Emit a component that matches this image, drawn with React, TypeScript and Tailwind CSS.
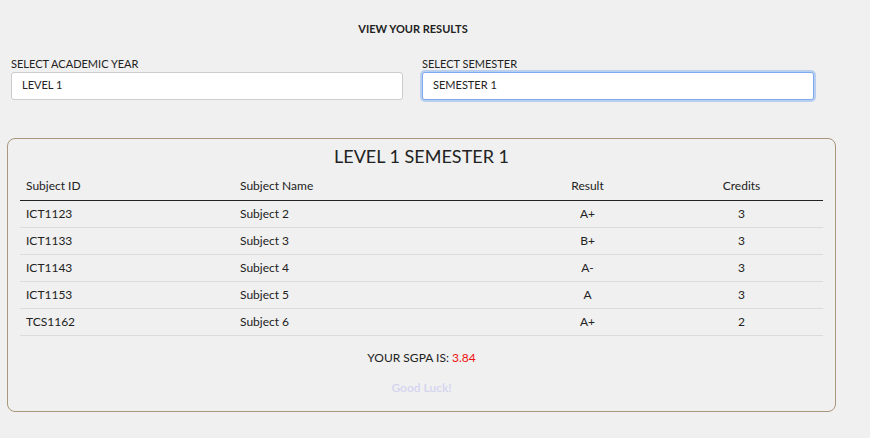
import React from 'react';

const rows = [
  { id: 'ICT1123', name: 'Subject 2', result: 'A+', credits: 3 },
  { id: 'ICT1133', name: 'Subject 3', result: 'B+', credits: 3 },
  { id: 'ICT1143', name: 'Subject 4', result: 'A-', credits: 3 },
  { id: 'ICT1153', name: 'Subject 5', result: 'A', credits: 3 },
  { id: 'TCS1162', name: 'Subject 6', result: 'A+', credits: 2 },
];

export default function App() {
  return (
    <div className="min-h-[438px] w-[870px] bg-[#f0f0f0] text-[#222] font-['Lato','Open_Sans',sans-serif]">
      <div className="w-[826px] pt-[21px] text-center text-[11px] font-bold text-[#222]">VIEW YOUR RESULTS</div>

      <div className="mt-[19px] flex gap-[19px] px-[11px]">
        <div className="w-[392px]">
          <label className="block text-[11px] leading-[14px] text-[#222]">SELECT ACADEMIC YEAR</label>
          <div className="mt-[1px] flex h-[28px] items-center rounded-[3px] border border-[#ccc] bg-white px-[10px] text-[11px]">
            LEVEL 1
          </div>
        </div>
        <div className="w-[392px]">
          <label className="block text-[11px] leading-[14px] text-[#222]">SELECT SEMESTER</label>
          <div className="mt-[1px] flex h-[28px] items-center rounded-[3px] border border-[#80a8f0] bg-white px-[10px] text-[11px] shadow-[0_0_0_2px_rgba(140,180,240,0.55)]">
            SEMESTER 1
          </div>
        </div>
      </div>

      <div className="mx-[7px] mt-[38px] w-[829px] rounded-[8px] border border-[#a8977a] px-[12px] pb-[14px] pt-[5px]">
        <h2 className="text-center text-[18px] leading-[24px] text-[#222]">LEVEL 1 SEMESTER 1</h2>
        <table className="mt-[6px] w-full table-fixed text-[12px]">
          <thead>
            <tr className="border-b border-[#222]">
              <th className="w-[214px] px-[6px] pb-[5px] pt-[3px] text-left font-normal">Subject ID</th>
              <th className="w-[281px] px-[6px] pb-[5px] pt-[3px] text-left font-normal">Subject Name</th>
              <th className="w-[145px] px-[6px] pb-[5px] pt-[3px] text-center font-normal">Result</th>
              <th className="px-[6px] pb-[5px] pt-[3px] text-center font-normal">Credits</th>
            </tr>
          </thead>
          <tbody>
            {rows.map((r) => (
              <tr key={r.id} className="h-[27px] border-b border-[#dcdcdc]">
                <td className="px-[6px]">{r.id}</td>
                <td className="px-[6px]">{r.name}</td>
                <td className="px-[6px] text-center">{r.result}</td>
                <td className="px-[6px] text-center">{r.credits}</td>
              </tr>
            ))}
          </tbody>
        </table>
        <div className="mt-[13px] text-center text-[12px]">
          YOUR SGPA IS: <span className="text-[#ee1111]">3.84</span>
        </div>
        <div className="mt-[12px] text-center text-[12px] font-semibold text-[#d4d4f0]">Good Luck!</div>
      </div>
    </div>
  );
}
